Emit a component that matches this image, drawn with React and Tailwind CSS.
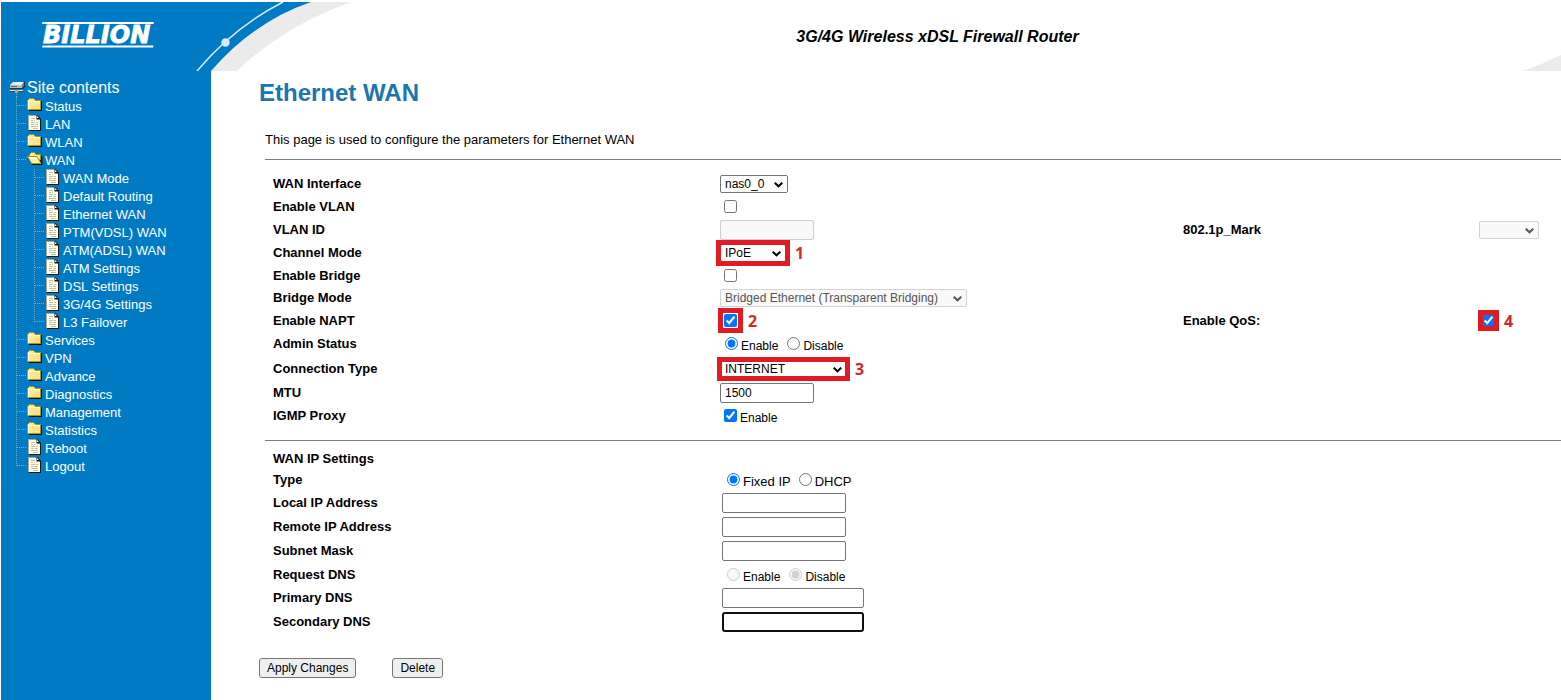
import React from "react";

const NAV = [
  { label: "Status", icon: "folder" },
  { label: "LAN", icon: "page" },
  { label: "WLAN", icon: "folder" },
  {
    label: "WAN",
    icon: "open",
    children: [
      "WAN Mode",
      "Default Routing",
      "Ethernet WAN",
      "PTM(VDSL) WAN",
      "ATM(ADSL) WAN",
      "ATM Settings",
      "DSL Settings",
      "3G/4G Settings",
      "L3 Failover",
    ],
  },
  { label: "Services", icon: "folder" },
  { label: "VPN", icon: "folder" },
  { label: "Advance", icon: "folder" },
  { label: "Diagnostics", icon: "folder" },
  { label: "Management", icon: "folder" },
  { label: "Statistics", icon: "folder" },
  { label: "Reboot", icon: "page" },
  { label: "Logout", icon: "page" },
];

function Cell({ children }) {
  return (
    <svg width="18" height="18" viewBox="0 0 18 18" className="shrink-0" aria-hidden="true">
      {children}
    </svg>
  );
}

function Branch({ kind }) {
  return (
    <Cell>
      <path d={kind === "end" ? "M7.5 0V9" : "M7.5 0V18"} stroke="#7fa9c0" strokeDasharray="1 1" />
      {kind !== "line" && <path d="M8 8.5H18" stroke="#7fa9c0" strokeDasharray="1 1" />}
    </Cell>
  );
}

function TreeIcon({ name }) {
  if (name === "page") {
    return (
      <Cell>
        <path d="M2 1H11L14 4V16H2Z" fill="#1b1b12" />
        <path d="M1 0H10V4H13V15H1Z" fill="#fffeec" />
        <path d="M1.5 15V0.5H10" stroke="#a9a890" fill="none" />
        <path d="M10 0L13.500 3.500V4.500H9.500V0Z" fill="#111" />
        <path d="M10 1L12 3H10Z" fill="#fff" />
        <path d="M4 3.500H8M4 5.500H6M7 5.500H8M4 7.500H8M9 7.500H11M4 9.500H7M8 9.500H11M4 11.500H11M6 13.500H11" stroke="#c3c1a6" />
      </Cell>
    );
  }
  if (name === "open") {
    return (
      <Cell>
        <path d="M3 4L5 2H9L10 4H14L15.500 6V14H5L1 8Z" fill="#15140a" />
        <path d="M2.500 6.500V3.500L4.500 1.500H7.500L9 3.500H13.500V9" fill="#ffe98a" stroke="#a8981c" />
        <path d="M0.500 5.500H10L14 12.500H4.500Z" fill="#fff0a0" stroke="#a8981c" />
        <path d="M2 6.500H9.500M3 7.500H10" stroke="#fffde0" />
      </Cell>
    );
  }
  return (
    <Cell>
      <path d="M2 4H15V14H2Z" fill="#15140a" />
      <path d="M0.500 3.500L2.500 1.500H6.500L8.500 3.500H13.500V12.500H0.500Z" fill="#ffe793" stroke="#a8981c" />
      <path d="M1.500 12V4.500H13" stroke="#fffbd0" fill="none" />
      <path d="M5 11.500H13M7 9.500H13M9 7.500H13" stroke="#f5cf80" strokeDasharray="1 1" />
    </Cell>
  );
}

function RootIcon() {
  return (
    <svg width="18" height="18" viewBox="0 0 18 18" className="shrink-0" aria-hidden="true">
      <path d="M4 3H16V8L14 10H1V6Z" fill="#26333a" />
      <path d="M4 3H15L13 6H1Z" fill="#e9eef0" />
      <path d="M1 6H13V9H1Z" fill="#b4bdc2" />
      <path d="M2 7.500H8" stroke="#5d6970" />
      <path d="M13 6L15 3V7L13 9Z" fill="#707a80" />
      <path d="M1 11.500H14" stroke="#e2e6e8" />
      <path d="M1 12.500H14" stroke="#39454c" />
      <path d="M6 11H9V14H6Z" fill="#e79a3c" />
      <path d="M7.500 15V18" stroke="#7fa9c0" strokeDasharray="1 1" />
    </svg>
  );
}

function NavLink({ children }) {
  return (
    <a href="#" className="pt-0.5 text-[13px] leading-[18px] whitespace-nowrap text-white">
      {children}
    </a>
  );
}

function Sidebar() {
  return (
    <nav className="w-[210px] shrink-0 bg-[#007bc3] pt-[7px] pl-2">
      <a href="#" className="flex h-[19px] items-center text-base text-white">
        <RootIcon />
        Site contents
      </a>
      <ul>
        {NAV.map((item, i) => (
          <li key={item.label}>
            <div className="flex h-[18px] items-center">
              <Branch kind={i === NAV.length - 1 ? "end" : "tee"} />
              <TreeIcon name={item.icon} />
              <NavLink>{item.label}</NavLink>
            </div>
            {item.children && (
              <ul>
                {item.children.map((child, j) => (
                  <li key={child} className="flex h-[18px] items-center">
                    <Branch kind="line" />
                    <Branch kind={j === item.children.length - 1 ? "end" : "tee"} />
                    <TreeIcon name="page" />
                    <NavLink>{child}</NavLink>
                  </li>
                ))}
              </ul>
            )}
          </li>
        ))}
      </ul>
    </nav>
  );
}

function Header() {
  return (
    <header className="flex h-[69px] justify-between">
      <svg width="352" height="69" viewBox="1 2 352 69" className="shrink-0" role="img" aria-label="Billion">
        <path d="M211 71Q254 21.500 311 2H352Q285 25 237 71Z" fill="#ebebeb" />
        <path d="M1 2H311Q254 21.500 211 71H1Z" fill="#007bc3" />
        <path d="M197 71Q234 27 283 2" stroke="#d9f0fb" strokeWidth="1.500" fill="none" />
        <circle cx="225.500" cy="42.500" r="4.200" fill="#d3ebf8" />
        <path d="M42.500 22H154L153.500 24H42ZM42.500 45.500H153.500L153 47.500H42Z" fill="#fff" />
        <text
          x="43"
          y="43"
          fontFamily="DejaVu Sans, sans-serif"
          fontSize="24"
          fontWeight="700"
          fontStyle="italic"
          fill="#fff"
          stroke="#fff"
          strokeWidth="0.800"
        >
          BILLION
        </text>
      </svg>
      <p className="grow pt-[23px] text-center text-base font-bold italic">3G/4G Wireless xDSL Firewall Router</p>
      <svg width="39" height="69" viewBox="0 0 39 69" className="shrink-0" aria-hidden="true">
        <path d="M1 69Q21 62 39 53V69Z" fill="#ebebeb" />
      </svg>
    </header>
  );
}

const LABEL = "text-[13px] leading-4 font-bold";
const INPUT =
  "h-5 rounded-[2px] border border-[#767676] bg-white px-1 text-xs text-black disabled:border-[#d0d0d0] disabled:bg-[#f8f8f8]";

function Select({ className, children, ...rest }) {
  return (
    <span className={`relative inline-flex ${className}`}>
      <select
        className="peer h-[18px] w-full appearance-none rounded-[2px] border border-[#767676] bg-white px-1 text-xs leading-4 text-black disabled:border-[#d3d3d3] disabled:bg-[#f9f9f9] disabled:text-[#555] disabled:opacity-100"
        {...rest}
      >
        {children}
      </select>
      <svg
        width="9"
        height="6"
        viewBox="0 0 9 6"
        className="pointer-events-none absolute top-[7px] right-[5px] text-black peer-disabled:text-[#555]"
        aria-hidden="true"
      >
        <path d="M0.700 0.700L4.500 4.300L8.300 0.700" fill="none" stroke="currentColor" strokeWidth="2" />
      </svg>
    </span>
  );
}

function Row({ className = "h-[23px]", children }) {
  return (
    <div className={`grid grid-cols-[447fr_463fr_296fr_82fr] items-center pl-2 ${className}`}>{children}</div>
  );
}

function Marked({ n, className, children }) {
  return (
    <span className="relative inline-flex">
      {children}
      <span className={`pointer-events-none absolute border-5 border-[#e01b24] ${className}`}>
        <span className="absolute -inset-y-1 left-full ml-[10px] flex items-center font-['Open_Sans',sans-serif] text-base leading-4 font-bold text-[#d9232b]">
          {n}
        </span>
      </span>
    </span>
  );
}

function Choice({ label, type = "radio", size = "text-xs", ...rest }) {
  return (
    <label className={`flex items-start gap-[3px] pt-1 leading-[18px] ${size}`}>
      <input type={type} className="size-[13px]" {...rest} />
      {label}
    </label>
  );
}

export default function App() {
  return (
    <div className="flex min-h-screen flex-col bg-white pt-0.5 pl-px font-['Liberation_Sans',Arial,sans-serif] text-black">
      <Header />
      <div className="flex grow">
        <Sidebar />
        <main className="min-w-0 grow pt-1.5 pl-12">
          <h1 className="text-2xl font-bold text-[#1a76b0]">Ethernet WAN</h1>
          <form className="mt-[21px]" onSubmit={(e) => e.preventDefault()}>
            <div className="ml-1.5">
              <p className="h-[29px] text-[13px] leading-5">
                This page is used to configure the parameters for Ethernet WAN
              </p>
              <section className="border-y border-[#7d7d7d] py-3">
                <Row>
                  <label htmlFor="iface" className={LABEL}>WAN Interface</label>
                  <Select id="iface" className="w-[68px]">
                    <option>nas0_0</option>
                  </Select>
                </Row>
                <Row>
                  <label htmlFor="vlan" className={LABEL}>Enable VLAN</label>
                  <input id="vlan" type="checkbox" className="ml-1 size-[13px]" />
                </Row>
                <Row>
                  <label htmlFor="vid" className={LABEL}>VLAN ID</label>
                  <input id="vid" type="text" disabled className={`${INPUT} w-[94px]`} />
                  <label htmlFor="mark" className={LABEL}>802.1p_Mark</label>
                  <Select id="mark" disabled className="w-[60px]">
                    <option></option>
                  </Select>
                </Row>
                <Row>
                  <label htmlFor="mode" className={LABEL}>Channel Mode</label>
                  <div className="flex">
                    <Marked n="1" className="-inset-1">
                      <Select id="mode" className="w-[66px]">
                        <option>IPoE</option>
                      </Select>
                    </Marked>
                  </div>
                </Row>
                <Row>
                  <label htmlFor="bridge" className={LABEL}>Enable Bridge</label>
                  <input id="bridge" type="checkbox" className="ml-1 size-[13px]" />
                </Row>
                <Row className="h-[22px]">
                  <label htmlFor="bmode" className={LABEL}>Bridge Mode</label>
                  <Select id="bmode" disabled className="w-[247px]">
                    <option>Bridged Ethernet (Transparent Bridging)</option>
                  </Select>
                </Row>
                <Row>
                  <label htmlFor="napt" className={LABEL}>Enable NAPT</label>
                  <div className="ml-1 flex">
                    <Marked n="2" className="-inset-1.5">
                      <input id="napt" type="checkbox" defaultChecked className="size-[13px]" />
                    </Marked>
                  </div>
                  <label htmlFor="qos" className={LABEL}>Enable QoS:</label>
                  <div className="ml-[3px] flex">
                    <Marked n="4" className="-inset-1">
                      <input id="qos" type="checkbox" defaultChecked className="size-[13px]" />
                    </Marked>
                  </div>
                </Row>
                <Row className="h-6">
                  <span className={LABEL}>Admin Status</span>
                  <div className="ml-[5px] flex gap-[9px]">
                    <Choice name="admin" label="Enable" defaultChecked />
                    <Choice name="admin" label="Disable" />
                  </div>
                </Row>
                <Row className="h-[26px]">
                  <label htmlFor="ctype" className={LABEL}>Connection Type</label>
                  <div className="flex">
                    <Marked n="3" className="-inset-[3px]">
                      <Select id="ctype" className="w-[127px]">
                        <option>INTERNET</option>
                      </Select>
                    </Marked>
                  </div>
                </Row>
                <Row className="h-[22px]">
                  <label htmlFor="mtu" className={LABEL}>MTU</label>
                  <input id="mtu" type="text" defaultValue="1500" className={`${INPUT} w-[94px]`} />
                </Row>
                <Row className="h-6">
                  <span className={LABEL}>IGMP Proxy</span>
                  <div className="ml-1 flex">
                    <Choice type="checkbox" label="Enable" defaultChecked />
                  </div>
                </Row>
              </section>
              <section className="pt-[7px]">
                <Row className="h-[21px]">
                  <h2 className={LABEL}>WAN IP Settings</h2>
                </Row>
                <Row className="h-[22px]">
                  <span className={LABEL}>Type</span>
                  <div className="ml-[7px] flex gap-2">
                    <Choice name="type" label="Fixed IP" size="text-[13px]" defaultChecked />
                    <Choice name="type" label="DHCP" size="text-[13px]" />
                  </div>
                </Row>
                {["Local IP Address", "Remote IP Address", "Subnet Mask"].map((name) => (
                  <Row key={name} className="h-6">
                    <label htmlFor={name} className={LABEL}>{name}</label>
                    <input id={name} type="text" className={`${INPUT} ml-0.5 w-[124px]`} />
                  </Row>
                ))}
                <Row>
                  <span className={LABEL}>Request DNS</span>
                  <div className="ml-[7px] flex gap-[9px]">
                    <Choice name="dns" label="Enable" disabled />
                    <Choice name="dns" label="Disable" disabled defaultChecked />
                  </div>
                </Row>
                <Row className="h-6">
                  <label htmlFor="dns1" className={LABEL}>Primary DNS</label>
                  <input id="dns1" type="text" className={`${INPUT} ml-0.5 w-[142px]`} />
                </Row>
                <Row className="h-6">
                  <label htmlFor="dns2" className={LABEL}>Secondary DNS</label>
                  <input
                    id="dns2"
                    type="text"
                    className="ml-0.5 h-5 w-[142px] rounded-[3px] border-2 border-[#101010] bg-white px-1 text-xs"
                  />
                </Row>
              </section>
            </div>
            <div className="mt-6 flex gap-9 pb-5">
              <button type="submit" className="h-5 rounded-[3px] border border-[#767676] bg-[#efefef] px-[7px] text-xs">
                Apply Changes
              </button>
              <button type="button" className="h-5 rounded-[3px] border border-[#767676] bg-[#efefef] px-[7px] text-xs">
                Delete
              </button>
            </div>
          </form>
        </main>
      </div>
    </div>
  );
}
